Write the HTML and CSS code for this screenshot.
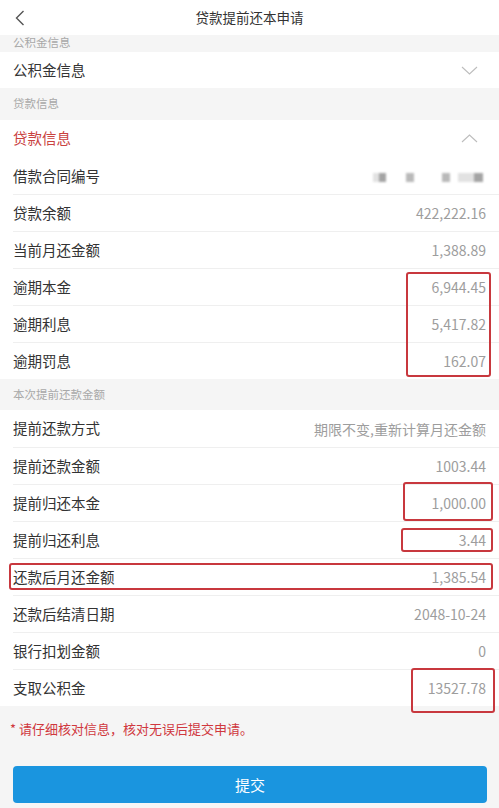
FILE: index.html
```html
<!DOCTYPE html>
<html lang="zh-CN">
<head>
<meta charset="utf-8">
<title>贷款提前还本申请</title>
<link rel="stylesheet" href="styles.css">
</head>
<body>
<div class="page">
  <header class="topbar">
    <svg class="back" width="10" height="16" viewBox="0 0 10 16"><polyline points="8.5,1 1.5,8 8.5,15" fill="none" stroke="#555" stroke-width="1.4"/></svg>
    <h1 class="title">贷款提前还本申请</h1>
  </header>

  <div class="band band-cut"><span class="band-text">公积金信息</span></div>
  <section class="group">
    <div class="row row-first">
      <span class="label">公积金信息</span>
      <svg class="chev" width="17" height="9" viewBox="0 0 17 9"><polyline points="1,1 8.5,8 16,1" fill="none" stroke="#bdbdbd" stroke-width="1.1"/></svg>
    </div>
  </section>

  <div class="band"><span class="band-text">贷款信息</span></div>
  <section class="group">
    <div class="row">
      <span class="label label-red">贷款信息</span>
      <svg class="chev" width="17" height="9" viewBox="0 0 17 9"><polyline points="1,8 8.5,1 16,8" fill="none" stroke="#bdbdbd" stroke-width="1.1"/></svg>
    </div>
    <div class="row row-plain">
      <span class="label">借款合同编号</span>
      <span class="blurred">
        <i class="px px-l w6"></i><i class="px px-d w7"></i><i class="px px-m w8 gap18"></i><i class="px px-m w8 gap28"></i><i class="px px-l w16 gap8"></i><i class="px px-d w9"></i>
      </span>
    </div>
    <div class="row"><span class="label">贷款余额</span><span class="value">422,222.16</span></div>
    <div class="row"><span class="label">当前月还金额</span><span class="value">1,388.89</span></div>
    <div class="row"><span class="label">逾期本金</span><span class="value">6,944.45</span></div>
    <div class="row"><span class="label">逾期利息</span><span class="value">5,417.82</span></div>
    <div class="row"><span class="label">逾期罚息</span><span class="value">162.07</span></div>
  </section>

  <div class="band band-short"><span class="band-text">本次提前还款金额</span></div>
  <section class="group">
    <div class="row"><span class="label">提前还款方式</span><span class="value">期限不变,重新计算月还金额</span></div>
    <div class="row"><span class="label">提前还款金额</span><span class="value">1003.44</span></div>
    <div class="row"><span class="label">提前归还本金</span><span class="value">1,000.00</span></div>
    <div class="row"><span class="label">提前归还利息</span><span class="value">3.44</span></div>
    <div class="row"><span class="label">还款后月还金额</span><span class="value">1,385.54</span></div>
    <div class="row"><span class="label">还款后结清日期</span><span class="value">2048-10-24</span></div>
    <div class="row"><span class="label">银行扣划金额</span><span class="value">0</span></div>
    <div class="row"><span class="label">支取公积金</span><span class="value">13527.78</span></div>
  </section>

  <p class="note">* 请仔细核对信息，核对无误后提交申请。</p>
  <div class="actions"><button class="submit" type="button">提交</button></div>

  <div class="mark mark-overdue"></div>
  <div class="mark mark-principal"></div>
  <div class="mark mark-interest"></div>
  <div class="mark mark-monthly"></div>
  <div class="mark mark-fund"></div>
</div>
</body>
</html>
```

FILE: styles.css
```css
* { box-sizing: border-box; }
html, body { margin: 0; padding: 0; }
body {
  background: #f5f5f5;
  font-family: "Noto Sans CJK SC", "Noto Sans", sans-serif;
  color: #333;
}
.page {
  position: relative;
  width: 499px;
  min-height: 808px;
  background: #f5f5f5;
}
.topbar {
  height: 35px;
  background: #fff;
  display: flex;
  align-items: center;
  justify-content: center;
  position: relative;
  z-index: 2;
}
.back {
  position: absolute;
  left: 15px;
  top: 10px;
}
.title {
  margin: 0;
  font-size: 13.5px;
  font-weight: normal;
  color: #333;
  line-height: 1;
}
.band {
  height: 32px;
  display: flex;
  align-items: center;
  padding-left: 13px;
  background: #f5f5f5;
}
.band-short { height: 31px; }
.band-text {
  font-size: 11.5px;
  color: #a8a8a8;
  line-height: 1;
}
.band-cut {
  height: 17px;
  padding-bottom: 1px;
}
.group {
  background: #fff;
}
.row {
  height: 37px;
  margin-left: 13px;
  padding-right: 13px;
  display: flex;
  align-items: center;
  justify-content: space-between;
}
.row + .row { border-top: 1px solid #efefef; }
.row + .row-plain { border-top-color: #fff; }
.row-first { height: 36px; }
.label {
  font-size: 14.5px;
  color: #333;
  line-height: 1;
}
.label-red { color: #c9423f; }
.value {
  font-size: 14px;
  color: #9d9d9d;
  line-height: 1;
}
.chev { margin-right: 8px; }
.blurred {
  display: flex;
  align-items: center;
  filter: blur(0.8px);
  margin-top: 2px;
  margin-right: 3px;
}
.px { display: block; height: 9px; }
.px-l { background: #e2e2e2; }
.px-m { background: #b9b9b9; }
.px-d { background: #a4a4a4; }
.w6 { width: 6px; }
.w7 { width: 7px; }
.w8 { width: 8px; }
.w9 { width: 9px; }
.w16 { width: 16px; }
.gap18 { margin-left: 20px; }
.gap28 { margin-left: 28px; }
.gap8 { margin-left: 8px; }
.note {
  margin: 0;
  padding: 14px 0 0 10px;
  font-size: 13px;
  line-height: 18px;
  color: #d0383e;
}
.actions {
  padding: 28px 12px 0 13px;
}
.submit {
  display: block;
  width: 100%;
  height: 37px;
  border: none;
  border-radius: 4px;
  background: #1a95df;
  color: #fff;
  font-family: "Noto Sans CJK SC", "Noto Sans", sans-serif;
  font-size: 15px;
}
.mark {
  position: absolute;
  border: 2px solid #c8383e;
  border-radius: 3px;
  pointer-events: none;
}
.mark-overdue { left: 406px; top: 272px; width: 85px; height: 105px; }
.mark-principal { left: 403px; top: 482px; width: 90px; height: 39px; }
.mark-interest { left: 401px; top: 528px; width: 92px; height: 24px; }
.mark-monthly { left: 9px; top: 563px; width: 484px; height: 27px; }
.mark-fund { left: 411px; top: 668px; width: 84px; height: 45px; }
```
